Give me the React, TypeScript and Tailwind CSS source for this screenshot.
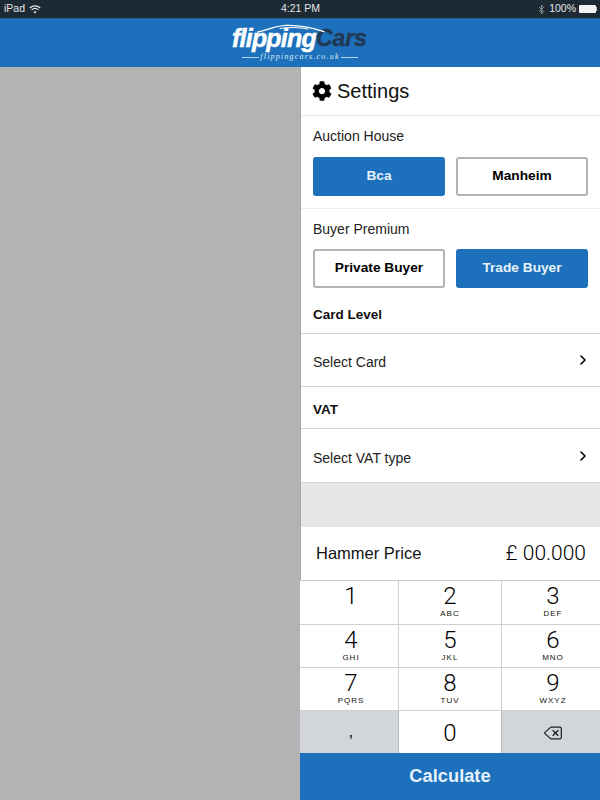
import { ChevronRight, Delete } from 'lucide-react';
import { FaCog } from 'react-icons/fa';

const keys = [
    { n: '1', s: '' },
    { n: '2', s: 'ABC' },
    { n: '3', s: 'DEF' },
    { n: '4', s: 'GHI' },
    { n: '5', s: 'JKL' },
    { n: '6', s: 'MNO' },
    { n: '7', s: 'PQRS' },
    { n: '8', s: 'TUV' },
    { n: '9', s: 'WXYZ' },
];

function Choice({ label, active }: { label: string; active?: boolean }) {
    return (
        <button
            className={
                active
                    ? 'h-[39px] w-[132px] rounded-[3px] bg-[#1d71bc] text-[13.7px] font-bold text-[#e6f1fa]'
                    : 'h-[39px] w-[132px] rounded-[3px] border-2 border-[#b4b4b4] bg-white text-[13.7px] font-bold text-black'
            }
        >
            {label}
        </button>
    );
}

function SelectRow({ label, height }: { label: string; height: string }) {
    return (
        <div className={`flex ${height} items-center justify-between border-b border-[#d4d4d4] pl-[12px] pr-[9px] text-[14px] text-[#222]`}>
            <span className="pt-[5px]">{label}</span>
            <ChevronRight className="h-[16px] w-[16px] text-black" strokeWidth={2.4} />
        </div>
    );
}

export default function App() {
    return (
        <div className="flex h-[800px] w-[600px] flex-col overflow-hidden bg-white font-['Liberation_Sans',sans-serif]">
            {/* Status bar */}
            <div className="flex h-[18px] shrink-0 items-center justify-between bg-[#1e2a33] pl-[4px] pr-[3px] text-[10.5px] text-[#e4e7e9]">
                <div className="flex w-[150px] items-center gap-[4px]">
                    <span>iPad</span>
                    <svg width="12" height="9" viewBox="0 0 12 9" fill="none" stroke="#e4e7e9" strokeWidth="1.2">
                        <path d="M0.8 3 C3.8 0.2 8.2 0.2 11.2 3" />
                        <path d="M2.6 4.9 C4.6 3.2 7.4 3.2 9.4 4.9" />
                        <path d="M6 8.6 L4.3 6.7 C5.3 6 6.7 6 7.7 6.7 Z" fill="#e4e7e9" stroke="none" />
                    </svg>
                </div>
                <span className="font-medium">4:21 PM</span>
                <div className="flex w-[150px] items-center justify-end gap-[3px]">
                    <svg width="7" height="11" viewBox="0 0 7 11" fill="none" stroke="#8b949a" strokeWidth="1">
                        <path d="M1 3 L5.6 7.6 L3.4 10 V1 L5.6 3.4 L1 8" />
                    </svg>
                    <span className="ml-[1px]">100%</span>
                    <div className="flex items-center">
                        <div className="h-[8px] w-[17px] rounded-[1px] bg-[#f2f2f2]" />
                        <div className="h-[4px] w-[1px] bg-[#c8c8c8]" />
                    </div>
                </div>
            </div>

            {/* Header with logo */}
            <div className="flex h-[49px] shrink-0 flex-col items-center justify-center border-t border-[#1a5f9e] bg-[#1d71bc] pt-[3px]">
                <div className="relative flex w-[136px] flex-col items-center">
                    <svg width="70" height="9" viewBox="0 0 70 9" fill="none" stroke="#ffffff" strokeLinecap="round" className="absolute left-[24px] top-[-4px] z-10">
                        <path d="M2 8 C12 6 18 2 30 1.4 C42 1 54 3 68 7.6" strokeWidth="1.4" />
                        <path d="M24 4.4 C34 3 44 3.4 52 5" strokeWidth="1" />
                    </svg>
                    <div className="flex h-[20px] items-center font-bold italic leading-[20px]">
                        <span className="w-[84px] origin-left scale-x-[0.96] whitespace-nowrap text-[26px] tracking-[-0.8px] text-white [-webkit-text-stroke:0.5px_white]">flipping</span>
                        <span className="w-[52px] whitespace-nowrap text-[23px] tracking-[-0.1px] text-[#203a55] [-webkit-text-stroke:0.5px_#203a55]">Cars</span>
                    </div>
                    <div className="mt-[5px] flex items-center gap-[1px]">
                        <div className="h-[1px] w-[17px] bg-[#b5d3ec]" />
                        <span className="font-['Liberation_Serif',serif] text-[8px] italic leading-[8px] tracking-[1.2px] text-[#dcebf7]">flippingcars.co.uk</span>
                        <div className="h-[1px] w-[17px] bg-[#b5d3ec]" />
                    </div>
                </div>
            </div>

            <div className="flex min-h-0 flex-1">
                {/* Empty map area */}
                <div className="w-[300px] shrink-0 bg-[#b3b3b3]" />

                {/* Settings panel */}
                <div className="flex min-w-0 flex-1 flex-col bg-white">
                    <div className="flex shrink-0 flex-col border-l border-[#a8a8a8]">
                        <div className="flex h-[49px] shrink-0 items-center gap-[5px] border-b border-[#e6e6e6] pl-[11px] text-[20px] text-[#111]">
                            <FaCog className="h-[20px] w-[20px] text-black" />
                            <span>Settings</span>
                        </div>

                        <div className="h-[93px] shrink-0 border-b border-[#ececec] pl-[12px] pr-[12px] pt-[12px]">
                            <div className="mb-[12px] h-[17px] text-[14px] leading-[17px] text-[#222]">Auction House</div>
                            <div className="flex gap-[11px]">
                                <Choice label="Bca" active />
                                <Choice label="Manheim" />
                            </div>
                        </div>

                        <div className="shrink-0 pl-[12px] pr-[12px] pt-[12px]">
                            <div className="mb-[11px] h-[17px] text-[14px] leading-[17px] text-[#222]">Buyer Premium</div>
                            <div className="flex gap-[11px]">
                                <Choice label="Private Buyer" />
                                <Choice label="Trade Buyer" active />
                            </div>
                        </div>

                        <div className="flex h-[46px] shrink-0 items-center border-b border-[#d4d4d4] pl-[12px] pt-[10px] text-[13.5px] font-bold text-[#111]">Card Level</div>
                        <SelectRow label="Select Card" height="h-[53px]" />
                        <div className="flex h-[42px] shrink-0 items-center border-b border-[#d4d4d4] pl-[12px] pt-[5px] text-[13.5px] font-bold text-[#111]">VAT</div>
                        <SelectRow label="Select VAT type" height="h-[54px]" />
                        <div className="h-[44px] shrink-0 bg-[#e6e6e6]" />

                        <div className="flex h-[53px] shrink-0 items-center justify-between pl-[15px] pr-[14px] text-[#111]">
                            <span className="text-[16.5px]">Hammer Price</span>
                            <span className="font-['Roboto',sans-serif] text-[21px] font-light text-black">£ 00.000</span>
                        </div>
                    </div>

                    {/* Keypad */}
                    <div className="grid h-[173px] shrink-0 grid-cols-[99px_103px_1fr] grid-rows-[44px_43px_43px_43px] border-t border-[#c8c8c8]">
                        {keys.map((k, i) => (
                            <div
                                key={k.n}
                                className={
                                    (i % 3 !== 2 ? 'border-r border-[#b8b8b8] ' : 'pl-[4px] ') +
                                    (i % 3 === 0 ? 'pl-[4px] ' : '') +
                                    'flex flex-col items-center border-b border-[#d0d0d0] pt-[3px] text-[#111]'
                                }
                            >
                                <span className="h-[25px] font-['Roboto',sans-serif] text-[24px] font-light leading-[25px] text-black">{k.n}</span>
                                <span className="text-[8px] leading-[10px] tracking-[1px]">{k.s}</span>
                            </div>
                        ))}
                        <div className="flex items-center justify-center border-r border-[#b8b8b8] bg-[#d2d5d9] pl-[4px] text-[12px] font-bold text-[#222]">,</div>
                        <div className="flex items-center justify-center border-r border-[#b8b8b8] bg-white font-['Roboto',sans-serif] text-[24px] font-light text-black">0</div>
                        <div className="flex items-center justify-center bg-[#d2d5d9] pl-[4px]">
                            <Delete className="h-[20px] w-[22px] text-[#222]" strokeWidth={1.5} />
                        </div>
                    </div>

                    <button className="h-[47px] shrink-0 bg-[#1d71bc] pb-[2px] text-[18.3px] font-bold text-[#e6f1fa]">Calculate</button>
                </div>
            </div>
        </div>
    );
}
